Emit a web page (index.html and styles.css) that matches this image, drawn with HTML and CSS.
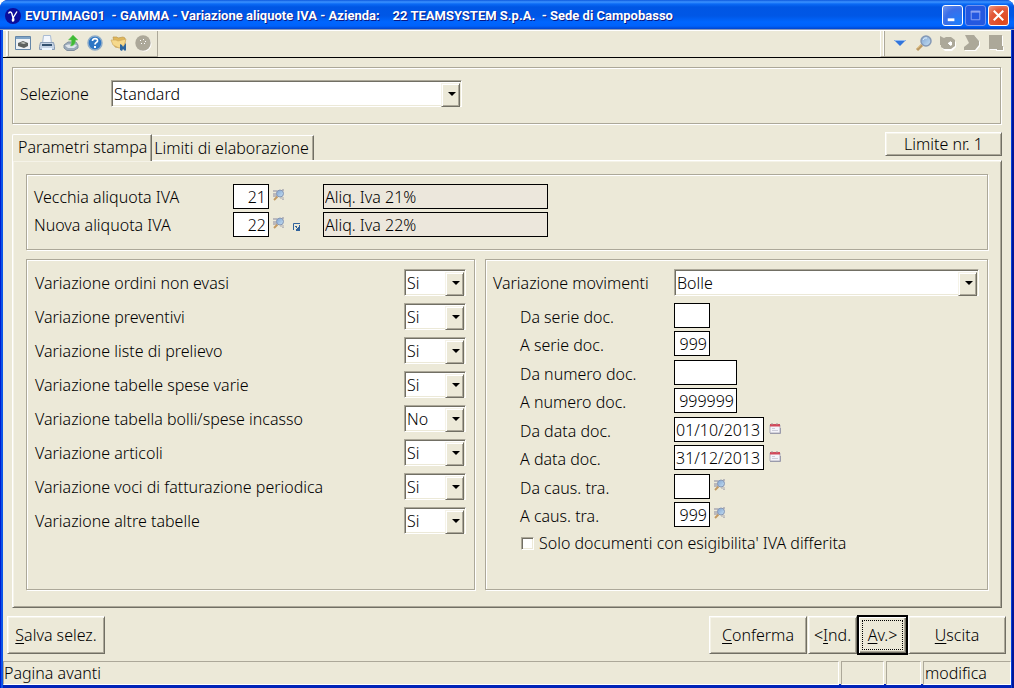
FILE: index.html
```html
<!DOCTYPE html>
<html lang="it">
<head>
<meta charset="utf-8">
<title>EVUTIMAG01 - GAMMA - Variazione aliquote IVA</title>
<link rel="stylesheet" href="styles.css">
</head>
<body>
<svg class="defs" aria-hidden="true">
  <defs>
    <linearGradient id="lensFill" x1="0" y1="0" x2="1" y2="1"><stop offset="0" stop-color="#7fa3d2"/><stop offset="1" stop-color="#c4dff2"/></linearGradient>
    <symbol id="lookup" viewBox="0 0 12 12">
      <path d="M0 1h4v2H0zM0 4h4v4H0zM9 10h2v1H9zM9 0h2v2H9z" fill="#bbb9bb"/>
      <path d="M1 11 4.500 7.500" stroke="#c39a62" stroke-width="2"/>
      <circle cx="7" cy="4.500" r="3.500" fill="url(#lensFill)" stroke="#8796b3"/>
      <path d="M7 9h4" stroke="#aaa9ad"/>
    </symbol>
    <symbol id="calendar" viewBox="0 0 12 12">
      <path d="M1 3h10v8H1z" fill="#f4f4fa" stroke="#b3b1bd"/>
      <path d="M1 2h10v2.500H1z" fill="#d24a5b"/>
      <path d="M3 1v2M8 1v2" stroke="#a58d94"/>
      <path d="M3 6h3v1H3zM3 8h6v1H3z" fill="#cdccd8"/>
      <path d="M1 11.500h10.500V6" stroke="#9a9bab" fill="none"/>
    </symbol>
  </defs>
</svg>
<div class="window">
  <header class="titlebar">
    <svg class="app-icon" width="16" height="16" viewBox="0 0 16 16"><circle cx="8" cy="8" r="8" fill="#0b0e9c"/><path d="M3.500 5.500C4.500 3.200 6.400 3.500 7 6l1 4M12 3.500 8.300 9.500C7 12 7.300 13 8 13c1 0 1-1.300.3-3.500" fill="none" stroke="#fff" stroke-width="1.400"/></svg>
    <h1 class="title">EVUTIMAG01 &nbsp;- GAMMA - Variazione aliquote IVA - Azienda: &nbsp;&nbsp; 22 TEAMSYSTEM S.p.A. &nbsp;- Sede di Campobasso</h1>
    <div class="caption-buttons">
      <button type="button" class="caption" aria-label="Riduci a icona"><svg viewBox="0 0 20 20"><path d="M5 13h7v3H5z" fill="#fff"/></svg></button>
      <button type="button" class="caption caption-disabled" aria-label="Ingrandisci" disabled><svg viewBox="0 0 20 20"><path d="M5 5h10v2H5z" fill="#8ba3f3"/><path d="M5.500 5.500h9v9h-9z" fill="none" stroke="#8ba3f3"/></svg></button>
      <button type="button" class="caption caption-close" aria-label="Chiudi"><svg viewBox="0 0 20 20"><path d="m5 5 10 10M15 5 5 15" stroke="#fff" stroke-width="2.200"/></svg></button>
    </div>
  </header>

  <div class="toolbar">
    <div class="tools tools-left">
      <button type="button" class="tool" aria-label="Anteprima"><svg viewBox="0 0 16 16"><path d="M.5 1.500h15v13H.5z" fill="#eef2f5" stroke="#6386a8"/><path d="M1 2h14v2H1z" fill="#7fa4c6"/><path d="m3 8 5-2 5 2v3l-4 2-6-2z" fill="#5e625f"/><path d="m5 8 3-1 3 1-2 1z" fill="#c6cac4"/></svg></button>
      <button type="button" class="tool" aria-label="Stampa"><svg viewBox="0 0 16 16"><path d="M4.500.5h7l1 8h-9z" fill="#f3f7fd" stroke="#a8bbd4"/><path d="M1.500 7.500h13l1 4v3h-15v-3z" fill="#c5d3e5" stroke="#8b9eb6"/><path d="M3 9h10v2H3z" fill="#33516f"/><path d="M3 13h10v2H3z" fill="#eef7ff"/></svg></button>
      <button type="button" class="tool" aria-label="Esporta"><svg viewBox="0 0 16 16"><path d="m1 10 4-3h8l2 3v3l-4 2.500H4L1 13z" fill="#9cabbb" stroke="#8190a0"/><path d="m2 10.500 3-1h7l2 1-3 2.500H5z" fill="#dfe5eb"/><path d="M10 0 15 5h-2.500c0 4-2 6-5 6C8.500 9 8.500 7 8.300 5H5.500z" fill="#3fba35" stroke="#79cd6c" stroke-width=".6"/></svg></button>
      <button type="button" class="tool" aria-label="Aiuto"><svg viewBox="0 0 16 16"><circle cx="8" cy="8" r="7" fill="#2c75c4" stroke="#8eacc9" stroke-width="1.500"/><path d="M5.500 6c0-3.500 5.500-3 5 0C10.200 7.500 8 7.500 8 9.500" fill="none" stroke="#fff" stroke-width="1.700"/><path d="M7 11h2v2H7z" fill="#fff"/></svg></button>
      <button type="button" class="tool" aria-label="Archivio"><svg viewBox="0 0 16 16"><path d="M2 2h4l1 1 5-1 2 1v7l-4 3-6-1z" fill="#e0b75a" stroke="#bd984e" stroke-width=".7"/><path d="M0 5h5l2 1 8-2-2 7-5 2-6-3z" fill="#f6d98b" stroke="#cfaa61" stroke-width=".7"/><path d="m9 9 2 1 1 2 3-4v7l-1 1-2-2-1 2-2-1z" fill="#2b66a0"/></svg></button>
      <button type="button" class="tool" aria-label="Interrompi" disabled><svg viewBox="0 0 16 16"><circle cx="9" cy="9" r="7.500" fill="#fff"/><circle cx="8" cy="8" r="7.700" fill="#aca899"/><path d="M5 5h1v1H5zM8 4h1v1H8zM10 6h1v1h-1zM6 8h1v1H6zM9 8h1v1H9z" fill="#fff"/></svg></button>
    </div>
    <div class="tools tools-right">
      <button type="button" class="tool" aria-label="Menu"><svg viewBox="0 0 16 16"><path d="M2 5h12L8 11z" fill="#3175dc"/><path d="M3 5.500h10" stroke="#91baf1"/></svg></button>
      <button type="button" class="tool" aria-label="Cerca"><svg viewBox="0 0 16 16"><path d="m1 15 5-5" stroke="#bd9960" stroke-width="3"/><path d="m1 13.500 4-4" stroke="#eed49c"/><circle cx="10" cy="6" r="5" fill="url(#lensFill)" stroke="#8498b5" stroke-width="1.500"/><path d="M7 5q1-3 4-2" stroke="#e2f1fa" fill="none"/></svg></button>
      <button type="button" class="tool" aria-label="Annulla" disabled><svg viewBox="0 0 16 16"><path d="M1 2l4 2h7l4 3v5l-4 4H5l-3-3z" fill="#fff"/><path d="M0 1l4 2 2-1h5l4 3v6l-4 3H4l-3-2v-2H0z" fill="#aca899"/><path d="m8 8 3-2v1h1v3l-2 1v-1H9V9H8z" fill="#fff"/></svg></button>
      <button type="button" class="tool" aria-label="Avanti" disabled><svg viewBox="0 0 16 16"><path d="M2 1h9l5 6v4l-4 5H1v-3l5-4z" fill="#fff"/><path d="M1 0h9l5 6v4l-4 5H0v-3l5-4z" fill="#aca899"/></svg></button>
      <button type="button" class="tool" aria-label="Pagina" disabled><svg viewBox="0 0 16 16"><path d="M2 1h13v11h1v4H8v-1H2z" fill="#fff"/><path d="M1 0h13v11h1v4H9v-1H1z" fill="#aca899"/></svg></button>
    </div>
  </div>

  <form class="content">
    <div class="group selection">
      <label for="selezione">Selezione</label>
      <span class="combo combo-selection"><select id="selezione"><option>Standard</option></select></span>
    </div>

    <div class="tab-header">
      <div class="tabs" role="tablist">
        <button type="button" class="tab tab-active" role="tab" aria-selected="true">Parametri stampa</button>
        <button type="button" class="tab" role="tab" aria-selected="false">Limiti di elaborazione</button>
      </div>
      <button type="button" class="btn btn-limit">Limite nr. 1</button>
    </div>

    <section class="panel" role="tabpanel">
      <div class="group rates">
        <div class="rate-row">
          <label for="vecchia">Vecchia aliquota IVA</label>
          <input class="box number" id="vecchia" value="21">
          <svg class="mini"><use href="#lookup"/></svg>
          <input class="box description" value="Aliq. Iva 21%" aria-label="Descrizione vecchia aliquota" readonly>
        </div>
        <div class="rate-row">
          <label for="nuova">Nuova aliquota IVA</label>
          <input class="box number" id="nuova" value="22">
          <svg class="mini"><use href="#lookup"/></svg>
          <svg class="open" viewBox="0 0 8 8"><path d="M.5 7V.5H7" fill="none" stroke="#31639c"/><path d="M7 2v6H3V6h1V5h1V4h1V2zM2 3h2v1H2zM3 4h1v1H3z" fill="#31639c"/></svg>
          <input class="box description" value="Aliq. Iva 22%" aria-label="Descrizione nuova aliquota" readonly>
        </div>
      </div>

      <div class="columns">
        <div class="group variations">
          <div class="variation"><label for="v1">Variazione ordini non evasi</label><span class="combo combo-short"><select id="v1"><option>Si</option><option>No</option></select></span></div>
          <div class="variation"><label for="v2">Variazione preventivi</label><span class="combo combo-short"><select id="v2"><option>Si</option><option>No</option></select></span></div>
          <div class="variation"><label for="v3">Variazione liste di prelievo</label><span class="combo combo-short"><select id="v3"><option>Si</option><option>No</option></select></span></div>
          <div class="variation"><label for="v4">Variazione tabelle spese varie</label><span class="combo combo-short"><select id="v4"><option>Si</option><option>No</option></select></span></div>
          <div class="variation"><label for="v5">Variazione tabella bolli/spese incasso</label><span class="combo combo-short"><select id="v5"><option>No</option><option>Si</option></select></span></div>
          <div class="variation"><label for="v6">Variazione articoli</label><span class="combo combo-short"><select id="v6"><option>Si</option><option>No</option></select></span></div>
          <div class="variation"><label for="v7">Variazione voci di fatturazione periodica</label><span class="combo combo-short"><select id="v7"><option>Si</option><option>No</option></select></span></div>
          <div class="variation"><label for="v8">Variazione altre tabelle</label><span class="combo combo-short"><select id="v8"><option>Si</option><option>No</option></select></span></div>
        </div>

        <div class="group movements">
          <div class="movement-head"><label for="mov">Variazione movimenti</label><span class="combo combo-fill"><select id="mov"><option>Bolle</option></select></span></div>
          <div class="fields">
            <div class="field"><label for="f1">Da serie doc.</label><input class="box number" id="f1"></div>
            <div class="field"><label for="f2">A serie doc.</label><input class="box number" id="f2" value="999"></div>
            <div class="field"><label for="f3">Da numero doc.</label><input class="box number-long" id="f3"></div>
            <div class="field"><label for="f4">A numero doc.</label><input class="box number-long" id="f4" value="999999"></div>
            <div class="field"><label for="f5">Da data doc.</label><input class="box date" id="f5" value="01/10/2013"><svg class="mini"><use href="#calendar"/></svg></div>
            <div class="field"><label for="f6">A data doc.</label><input class="box date" id="f6" value="31/12/2013"><svg class="mini"><use href="#calendar"/></svg></div>
            <div class="field"><label for="f7">Da caus. tra.</label><input class="box number" id="f7"><svg class="mini"><use href="#lookup"/></svg></div>
            <div class="field"><label for="f8">A caus. tra.</label><input class="box number" id="f8" value="999"><svg class="mini"><use href="#lookup"/></svg></div>
          </div>
          <label class="check"><input type="checkbox">Solo documenti con esigibilita' IVA differita</label>
        </div>
      </div>
    </section>

    <div class="actions">
      <button type="button" class="btn btn-wide"><span><u>S</u>alva selez.</span></button>
      <div class="actions-right">
        <button type="button" class="btn btn-wide"><span><u>C</u>onferma</span></button>
        <button type="button" class="btn btn-nav"><span>&lt;<u>I</u>nd.</span></button>
        <button type="button" class="btn btn-nav btn-default"><span><u>A</u>v.&gt;</span></button>
        <button type="button" class="btn btn-wide"><span><u>U</u>scita</span></button>
      </div>
    </div>
  </form>

  <footer class="status">
    <div class="cell cell-main">Pagina avanti</div>
    <div class="cell"></div>
    <div class="cell"></div>
    <div class="cell">modifica</div>
  </footer>
</div>
</body>
</html>
```
FILE: styles.css
```css
:root {
  --face: #ece9d8;
  --light: #f5f3e8;
  --shade: #aca899;
  --dark: #716f64;
}

* { box-sizing: border-box; }

body {
  margin: 0;
  background: #fff;
  color: #000;
  font: 300 16px/24px "Noto Sans", sans-serif;
}

button, input, select {
  margin: 0;
  padding: 0;
  border: 0;
  border-radius: 0;
  background: none;
  color: inherit;
  font: inherit;
  outline: none;
}

.defs { position: absolute; width: 0; height: 0; }

.window {
  display: flex;
  flex-direction: column;
  min-height: 100vh;
  padding: 0 3px 4px;
  border-radius: 8px 8px 0 0;
  background: linear-gradient(90deg, #001bcf 0 1px, #0a53e8 1px 3px, transparent 3px calc(100% - 3px), #0441d8 calc(100% - 3px) calc(100% - 2px), #00169a calc(100% - 2px)), #0023b8;
}

/* Title bar */
.titlebar {
  display: flex;
  align-items: center;
  height: 30px;
  margin: 0 -3px;
  padding: 2px 5px 0;
  border-radius: 8px 8px 0 0;
  border-bottom: 1px solid #8c9ab8;
  background: linear-gradient(#0c58dd 0, #3c93ff 2px, #0a6af5 4px, #0056e4 7px, #0057e6 16px, #0066ff 22px, #0062fb 26px, #0045cf 29px);
}

.title {
  flex: 1;
  margin: 0 0 0 4px;
  color: #fff;
  font: 700 13px/20px Roboto, sans-serif;
  text-shadow: 1px 1px 0 #0a1883;
  white-space: nowrap;
}

.caption-buttons { display: flex; gap: 2px; }

.caption {
  width: 21px;
  height: 21px;
  border: 1px solid #fff;
  border-radius: 3px;
  background: radial-gradient(circle at 80% 85%, #1f7dfb, #3a6ee8 60%, #7396ea);
}

.caption svg { display: block; width: 19px; height: 19px; }
.caption-disabled { border-color: #7393ee; background: #2458e0; }
.caption-close { background: radial-gradient(circle at 70% 80%, #e0471a, #e2593a 60%, #ee9c84); }

/* Toolbar */
.toolbar {
  display: flex;
  justify-content: space-between;
  height: 28px;
  border-top: 1px solid #fff;
  border-bottom: 1px solid #000;
  background: var(--face);
}

.tools {
  display: flex;
  align-items: center;
  gap: 8px;
  padding-bottom: 1px;
  border-bottom: 1px solid var(--shade);
}

.tools-left {
  margin-left: 3px;
  padding-right: 6px;
  padding-left: 8px;
  border-left: 1px solid #fff;
  border-right: 1px solid var(--shade);
  box-shadow: inset 1px 0 0 var(--light), inset 2px 0 0 var(--shade);
}

.tools-right {
  padding-right: 7px;
  padding-left: 11px;
  border-left: 1px solid #fff;
  box-shadow: inset 2px 0 0 var(--face), inset 3px 0 0 #fff, inset 4px 0 0 var(--shade);
}

.tool { width: 16px; height: 16px; }
.tool svg { display: block; width: 16px; height: 16px; overflow: visible; }

/* Shared controls */
.group {
  border: 1px solid var(--shade);
  box-shadow: 1px 1px 0 #fff, inset 1px 1px 0 #fff;
}

.combo {
  position: relative;
  display: block;
  height: 27px;
  border: 1px solid;
  border-color: var(--shade) #fff #fff var(--shade);
  background: #fff;
  box-shadow: inset 1px 1px 0 var(--dark), inset -1px -1px 0 var(--face);
}

.combo select {
  appearance: none;
  display: block;
  width: 100%;
  height: 25px;
  padding: 0 20px 0 2px;
  line-height: 24px;
}

.combo::before {
  content: "";
  position: absolute;
  top: 2px;
  right: 1px;
  width: 17px;
  height: 22px;
  border: 1px solid;
  border-color: #f5f3e8 var(--dark) var(--dark) #f5f3e8;
  background: var(--face);
  box-shadow: inset 1px 1px 0 #fff, inset -1px -1px 0 var(--shade);
  pointer-events: none;
}

.combo::after {
  content: "";
  position: absolute;
  top: 11px;
  right: 5px;
  border: 4px solid transparent;
  border-top-color: #000;
  border-bottom: 0;
  pointer-events: none;
}

.box {
  height: 25px;
  border: 1px solid #000;
  background: #fff;
  line-height: 23px;
}

.number { width: 36px; padding-right: 2px; text-align: right; }
.number-long { width: 63px; padding-right: 2px; text-align: right; }
.date { width: 90px; padding-left: 1px; }
.description { width: 225px; padding-left: 1px; background: #ece7dc; }
.mini { width: 12px; height: 12px; }

.btn {
  border: 1px solid;
  border-color: #fff var(--dark) var(--dark) #fff;
  background: var(--face);
  box-shadow: inset 1px 1px 0 var(--light), inset -1px -1px 0 var(--shade);
  white-space: nowrap;
}

.btn u { text-underline-offset: 2px; text-decoration-thickness: 1px; }

/* Main form */
.content {
  display: flex;
  flex: 1;
  flex-direction: column;
  padding: 9px 5px 7px 4px;
  background: var(--face);
}

.selection {
  display: flex;
  align-items: center;
  height: 57px;
  margin: 0 5px;
  padding: 0 7px 4px;
}

.selection label { width: 91px; }
.combo-selection { width: 351px; }

.tab-header {
  display: flex;
  align-items: flex-start;
  justify-content: space-between;
  height: 28px;
  margin: 8px 4px 0 5px;
}

.tabs { display: flex; align-items: flex-end; height: 29px; padding-top: 2px; z-index: 1; }

.tab {
  height: 25px;
  padding: 0 4px 0 2px;
  margin-bottom: 1px;
  border: solid;
  border-width: 1px 1px 0 0;
  border-color: #fff var(--dark);
  background: var(--face);
  box-shadow: inset -1px 0 0 var(--shade);
}

.tab-active {
  height: 27px;
  margin-bottom: 0;
  padding: 0 4px 2px 5px;
  border-left: 1px solid #fff;
  border-radius: 2px 0 0 0;
}

.btn-limit { width: 117px; height: 24px; line-height: 20px; }

.panel {
  display: flex;
  flex: 1;
  flex-direction: column;
  gap: 9px;
  margin: 0 4px 0 5px;
  padding: 13px 13px 17px;
  border: 1px solid;
  border-color: #fff var(--dark) var(--dark) #fff;
  box-shadow: inset 1px 1px 0 var(--light), inset -1px -1px 0 var(--shade);
}

.rates {
  display: flex;
  flex-direction: column;
  gap: 2px;
  height: 76px;
  padding: 9px 7px;
}

.rate-row { display: flex; align-items: flex-start; height: 26px; }
.rate-row label { width: 199px; padding-top: 1px; }
.rate-row .mini { margin: 5px 8px 0 4px; }
.rate-row .open { width: 8px; height: 8px; margin-top: 11px; }
.rate-row .description { margin-left: 30px; }
.rate-row .open + .description { margin-left: 22px; }

.columns { display: grid; flex: 1; grid-template-columns: 449fr 503fr; gap: 10px; }

.variations {
  display: flex;
  flex-direction: column;
  gap: 7px;
  padding: 9px 8px 9px 8px;
}

.variation { display: flex; align-items: center; justify-content: space-between; }
.combo-short { width: 62px; }

.movements { padding: 9px 8px 9px 7px; }
.movement-head { display: flex; align-items: center; }
.movement-head label { width: 181px; }
.combo-fill { flex: 1; }
.fields { padding: 7px 0 0 27px; }
.field { display: flex; align-items: flex-start; height: 28px; }
.field:nth-child(even) { height: 29px; }
.field label { width: 154px; padding-top: 2px; }
.field .mini { margin: 5px 0 0 4px; }
.field .date + .mini { margin-left: 5px; }

.check { display: flex; align-items: center; gap: 5px; margin-left: 28px; }

.check input {
  appearance: none;
  width: 13px;
  height: 13px;
  border: 1px solid;
  border-color: var(--shade) #fff #fff var(--shade);
  background: #fff;
  box-shadow: inset 1px 1px 0 var(--dark), inset -1px -1px 0 var(--face);
}

/* Bottom buttons */
.actions { display: flex; justify-content: space-between; margin-top: 8px; }
.actions-right { display: flex; gap: 1px; }
.actions .btn { height: 38px; }
.btn-wide { width: 98px; }
.btn-nav { width: 49px; }
.actions .btn-default {
  padding: 2px;
  border-color: #000;
  box-shadow: 0 0 0 1px #000, inset 1px 1px 0 #fff, inset -1px -1px 0 var(--dark), inset -2px -2px 0 var(--shade);
}
.btn-default span { display: block; margin: 0 1px; border: 1px dotted #000; line-height: 28px; }

/* Status bar */
.status {
  display: grid;
  grid-template-columns: 1fr 43px 35px 88px;
  gap: 2px;
  height: 23px;
  background: var(--face);
}

.cell {
  padding-left: 1px;
  border: 1px solid;
  border-color: var(--shade) #fff #fff var(--shade);
  line-height: 22px;
}

.cell-main { padding-left: 0; }
```
